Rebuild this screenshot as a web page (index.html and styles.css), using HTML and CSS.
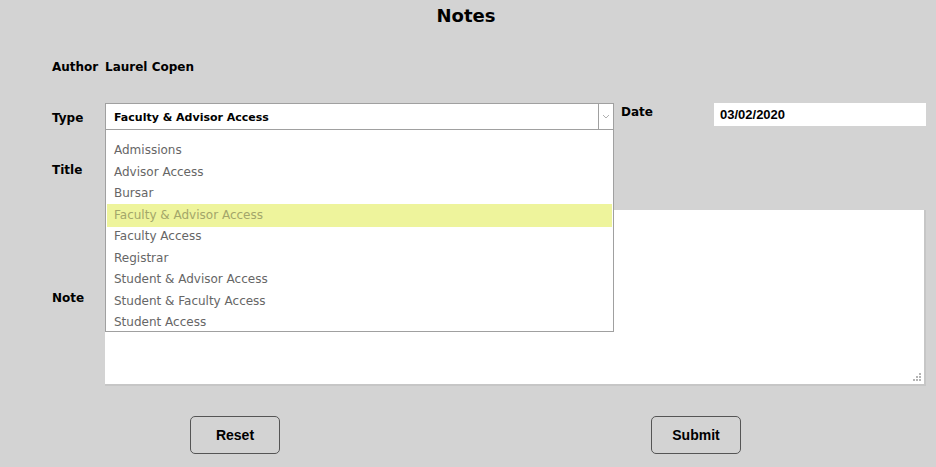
FILE: index.html
```html
<!DOCTYPE html>
<html>
<head>
<meta charset="utf-8">
<link rel="stylesheet" href="styles.css">
</head>
<body>
<div class="page">
  <h1 class="heading">Notes</h1>
  <div class="row author-row">
    <span class="label">Author</span>
    <span class="author">Laurel Copen</span>
  </div>
  <div class="row type-row">
    <span class="label type-label">Type</span>
    <div class="select-wrap">
      <div class="select">
        <span class="select-value">Faculty &amp; Advisor Access</span>
        <span class="select-arrow">
          <svg width="8" height="5" viewBox="0 0 8 5"><path d="M1 1 L4 4 L7 1" fill="none" stroke="#b0b0b0" stroke-width="1"/></svg>
        </span>
      </div>
      <ul class="dropdown">
        <li>Admissions</li>
        <li>Advisor Access</li>
        <li>Bursar</li>
        <li class="active">Faculty &amp; Advisor Access</li>
        <li>Faculty Access</li>
        <li>Registrar</li>
        <li>Student &amp; Advisor Access</li>
        <li>Student &amp; Faculty Access</li>
        <li>Student Access</li>
      </ul>
    </div>
    <span class="label date-label">Date</span>
    <div class="date-input">03/02/2020</div>
  </div>
  <div class="row title-row">
    <span class="label">Title</span>
    <div class="title-input"></div>
  </div>
  <div class="row note-row">
    <span class="label">Note</span>
    <div class="note-input">
      <svg class="grip" width="8" height="8" viewBox="0 0 8 8">
        <rect x="6" y="0" width="2" height="2" fill="#b4b4b4"/>
        <rect x="3" y="3" width="2" height="2" fill="#b4b4b4"/>
        <rect x="6" y="3" width="2" height="2" fill="#b4b4b4"/>
        <rect x="0" y="6" width="2" height="2" fill="#b4b4b4"/>
        <rect x="3" y="6" width="2" height="2" fill="#b4b4b4"/>
        <rect x="6" y="6" width="2" height="2" fill="#b4b4b4"/>
      </svg>
    </div>
  </div>
  <div class="buttons">
    <button class="btn">Reset</button>
    <button class="btn">Submit</button>
  </div>
</div>
</body>
</html>
```

FILE: styles.css
```css
* { box-sizing: border-box; }
html, body {
  margin: 0;
  padding: 0;
  background: #d3d3d3;
}
body {
  font-family: "DejaVu Sans", sans-serif;
  color: #000;
  width: 936px;
  height: 467px;
  overflow: hidden;
}
.page {
  display: flex;
  flex-direction: column;
  padding: 0 10px 0 52px;
}
.heading {
  margin: 4px 0 0 0;
  height: 24px;
  line-height: 24px;
  font-size: 18px;
  font-weight: bold;
  text-align: center;
  padding-right: 46px;
}
.row {
  display: flex;
  align-items: flex-start;
}
.label {
  font-size: 12px;
  font-weight: bold;
  width: 53px;
  flex: none;
}
.author-row {
  margin-top: 31px;
  height: 16px;
  line-height: 16px;
}
.author {
  font-size: 12px;
  font-weight: bold;
}
.type-row {
  margin-top: 28px;
  height: 27px;
}
.type-label {
  line-height: 27px;
  padding-top: 2px;
}
.select-wrap {
  position: relative;
  width: 509px;
  flex: none;
}
.select {
  height: 27px;
  background: #fff;
  border: 1px solid #a0a0a0;
  display: flex;
  align-items: center;
}
.select-value {
  flex: 1;
  padding-left: 8px;
  padding-top: 1px;
  font-size: 11px;
  font-weight: bold;
}
.select-arrow {
  width: 15px;
  height: 100%;
  border-left: 1px solid #a0a0a0;
  display: flex;
  align-items: center;
  justify-content: center;
}
.dropdown {
  position: absolute;
  top: 26px;
  left: 0;
  width: 509px;
  margin: 0;
  padding: 9px 1px 0 1px;
  list-style: none;
  background: #fff;
  border: 1px solid #a0a0a0;
  height: 203px;
  z-index: 5;
}
.dropdown li {
  height: 21.5px;
  line-height: 22px;
  padding-left: 7px;
  font-size: 12px;
  color: #666;
}
.dropdown li.active {
  background: #eef49c;
  color: #a3a66a;
  height: 23px;
  line-height: 23px;
  margin-bottom: -1.5px;
}
.date-label {
  margin-left: 7px;
  width: 93px;
  line-height: 18px;
}
.date-input {
  width: 212px;
  height: 23px;
  background: #fff;
  font-family: "Liberation Sans", Arial, sans-serif;
  font-size: 13px;
  font-weight: bold;
  line-height: 23px;
  padding-left: 6px;
}
.title-row {
  margin-top: 28px;
  height: 24px;
}
.title-row .label {
  line-height: 24px;
}
.title-input {
  width: 509px;
  height: 24px;
  background: #fff;
}
.note-row {
  margin-top: 28px;
  align-items: center;
}
.note-row .label {
  padding-top: 0;
}
.note-input {
  position: relative;
  width: 821px;
  height: 176px;
  background: #fff;
  border-right: 2px solid #c6c6c6;
  border-bottom: 2px solid #c6c6c6;
}
.grip {
  position: absolute;
  right: 3px;
  bottom: 3px;
}
.buttons {
  display: flex;
  margin-top: 30px;
  padding-left: 138px;
  gap: 371px;
}
.btn {
  width: 90px;
  height: 38px;
  background: transparent;
  border: 1px solid #555;
  border-radius: 5px;
  font-family: "Liberation Sans", Arial, sans-serif;
  font-size: 14px;
  font-weight: bold;
  color: #000;
  padding: 0;
}
```
